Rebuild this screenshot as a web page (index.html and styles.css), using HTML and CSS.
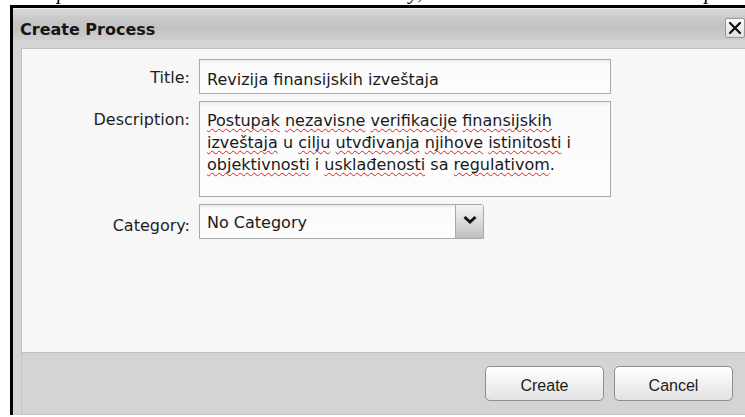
FILE: index.html
```html
<!DOCTYPE html>
<html lang="sr">
<head>
<meta charset="utf-8">
<title>Create Process</title>
<link rel="stylesheet" href="styles.css">
</head>
<body>
  <p class="caption"><span>the process is then in the whole list as an entry, and the main admin can then reopen it</span></p>

  <div class="dialog" role="dialog" aria-labelledby="dlg-title">
    <div class="dialog-header">
      <span class="dialog-title" id="dlg-title">Create Process</span>
      <button class="close-btn" type="button" aria-label="Close">
        <svg width="12" height="12" viewBox="0 0 12 12" aria-hidden="true">
          <path d="M1 1 L11 11 M11 1 L1 11" stroke="#111" stroke-width="2.2" stroke-linecap="square" fill="none"/>
        </svg>
      </button>
    </div>

    <div class="dialog-content">
      <div class="dialog-body">
        <form class="form-grid">
          <label class="field-label" for="proc-title">Title:</label>
          <input class="text-input" id="proc-title" type="text" value="Revizija finansijskih izveštaja">

          <label class="field-label" for="proc-desc">Description:</label>
          <div class="text-area" id="proc-desc" role="textbox" aria-multiline="true"><span class="misspelled">Postupak</span> <span class="misspelled">nezavisne</span> <span class="misspelled">verifikacije</span> <span class="misspelled">finansijskih</span><br><span class="misspelled">izveštaja</span> u <span class="misspelled">cilju</span> <span class="misspelled">utvđivanja</span> <span class="misspelled">njihove</span> <span class="misspelled">istinitosti</span> i<br><span class="misspelled">objektivnosti</span> i <span class="misspelled">usklađenosti</span> sa <span class="misspelled">regulativom</span>.</div>

          <label class="field-label field-label--select" for="proc-cat">Category:</label>
          <div class="select-box" id="proc-cat" role="combobox" aria-expanded="false">
            <span class="select-value">No Category</span>
            <span class="select-arrow">
              <svg width="16" height="9" viewBox="0 0 16 9" aria-hidden="true">
                <polyline points="2.5,2 8,7 13.5,2" stroke="#111" stroke-width="3" fill="none"/>
              </svg>
            </span>
          </div>
        </form>
      </div>

      <div class="dialog-footer">
        <button class="btn" type="button">Create</button>
        <button class="btn" type="button">Cancel</button>
      </div>
    </div>
  </div>
</body>
</html>
```

FILE: styles.css
```css
* {
  box-sizing: border-box;
}

html,
body {
  margin: 0;
  padding: 0;
}

body {
  width: 745px;
  height: 417px;
  overflow: hidden;
  background: #ffffff;
  font-family: "DejaVu Sans", "Noto Sans", sans-serif;
  color: #1e1e1e;
}

/* page text line above the dialog, scrolled so only its descenders stay visible */
.caption {
  margin: 0;
  height: 5px;
  overflow: hidden;
  font: italic 21px/24px "Liberation Serif", serif;
  white-space: nowrap;
  color: #000;
}

.caption span {
  display: block;
  margin-top: -20px;
  padding-left: 26px;
}

/* dialog window */
.dialog {
  margin-left: 10px;
  width: 763px;
  border-top: 3px solid #000;
  border-left: 3px solid #000;
  background: #d4d4d4;
}

.dialog-header {
  height: 32px;
  display: flex;
  justify-content: space-between;
  align-items: flex-start;
  padding: 0 28px 0 7px;
  border-top: 1px solid #ececec;
  background: linear-gradient(#d9d9d9 0%, #c9c9c9 30%, #c2c2c2 60%, #cecece 100%);
}

.dialog-title {
  margin-top: 11px;
  font-size: 16px;
  line-height: 20px;
  font-weight: bold;
  color: #151515;
}

.close-btn {
  margin-top: 9px;
  width: 20px;
  height: 20px;
  padding: 0;
  display: flex;
  align-items: center;
  justify-content: center;
  border: 1px solid #9a9a9a;
  border-radius: 2px;
  background: linear-gradient(#fbfbfb, #e0e0e0);
}

.dialog-content {
  padding: 8px 8px 0 8px;
}

.dialog-body {
  height: 305px;
  border: 1px solid #c2c2c2;
  background: #f7f7f7;
}

/* form */
.form-grid {
  margin: 0;
  padding-top: 10px;
  display: grid;
  grid-template-columns: 168px 412px;
  column-gap: 9px;
  row-gap: 7px;
  align-items: start;
}

.field-label {
  padding-top: 9px;
  font-size: 16px;
  line-height: 20px;
  text-align: right;
  color: #1e1e1e;
}

.field-label--select {
  padding-top: 12px;
}

.text-input {
  display: block;
  width: 412px;
  height: 35px;
  margin: 0;
  padding: 6px 7px 0 7px;
  border: 1px solid #a9a9a9;
  border-radius: 0;
  background: linear-gradient(#ececec 0px, #fbfbfb 4px, #fdfdfd 100%);
  font-family: "DejaVu Sans", "Noto Sans", sans-serif;
  font-size: 16px;
  color: #1a1a1a;
  outline: none;
}

.text-area {
  height: 96px;
  padding: 8px 7px;
  border: 1px solid #a9a9a9;
  background: linear-gradient(#ececec 0px, #fbfbfb 4px, #fdfdfd 100%);
  font-size: 16px;
  line-height: 22px;
  white-space: nowrap;
  color: #1a1a1a;
}

/* spell-checker squiggle under unknown words */
.misspelled {
  text-decoration: underline wavy #e0201a;
  text-decoration-thickness: 1px;
  text-underline-offset: 2px;
  text-decoration-skip-ink: none;
}

.select-box {
  width: 285px;
  height: 35px;
  display: flex;
  border: 1px solid #a9a9a9;
  border-top-right-radius: 3px;
  background: linear-gradient(#ececec 0px, #fbfbfb 4px, #fdfdfd 100%);
}

.select-value {
  flex: 1;
  padding: 8px 7px 0 7px;
  font-size: 16px;
  line-height: 20px;
  color: #1a1a1a;
}

.select-arrow {
  width: 28px;
  display: flex;
  align-items: center;
  justify-content: center;
  padding-bottom: 5px;
  border-left: 1px solid #a9a9a9;
  border-top-right-radius: 2px;
  background: linear-gradient(#f4f4f4, #d6d6d6 60%, #bfbfbf);
}

/* footer with actions */
.dialog-footer {
  height: 62px;
  display: flex;
  justify-content: flex-end;
  align-items: flex-start;
  gap: 10px;
  padding: 13px 31px 0 0;
  border: 1px solid #c4c4c4;
  border-top: none;
  background: #d4d4d4;
}

.btn {
  width: 119px;
  height: 35px;
  padding: 4px 0 0 0;
  border: 1px solid #8e8e8e;
  border-radius: 5px;
  background: linear-gradient(#ffffff, #f1f1f1 50%, #e3e3e3);
  font-family: "Liberation Sans", Arial, sans-serif;
  font-size: 16px;
  color: #1c1c1c;
}
```
